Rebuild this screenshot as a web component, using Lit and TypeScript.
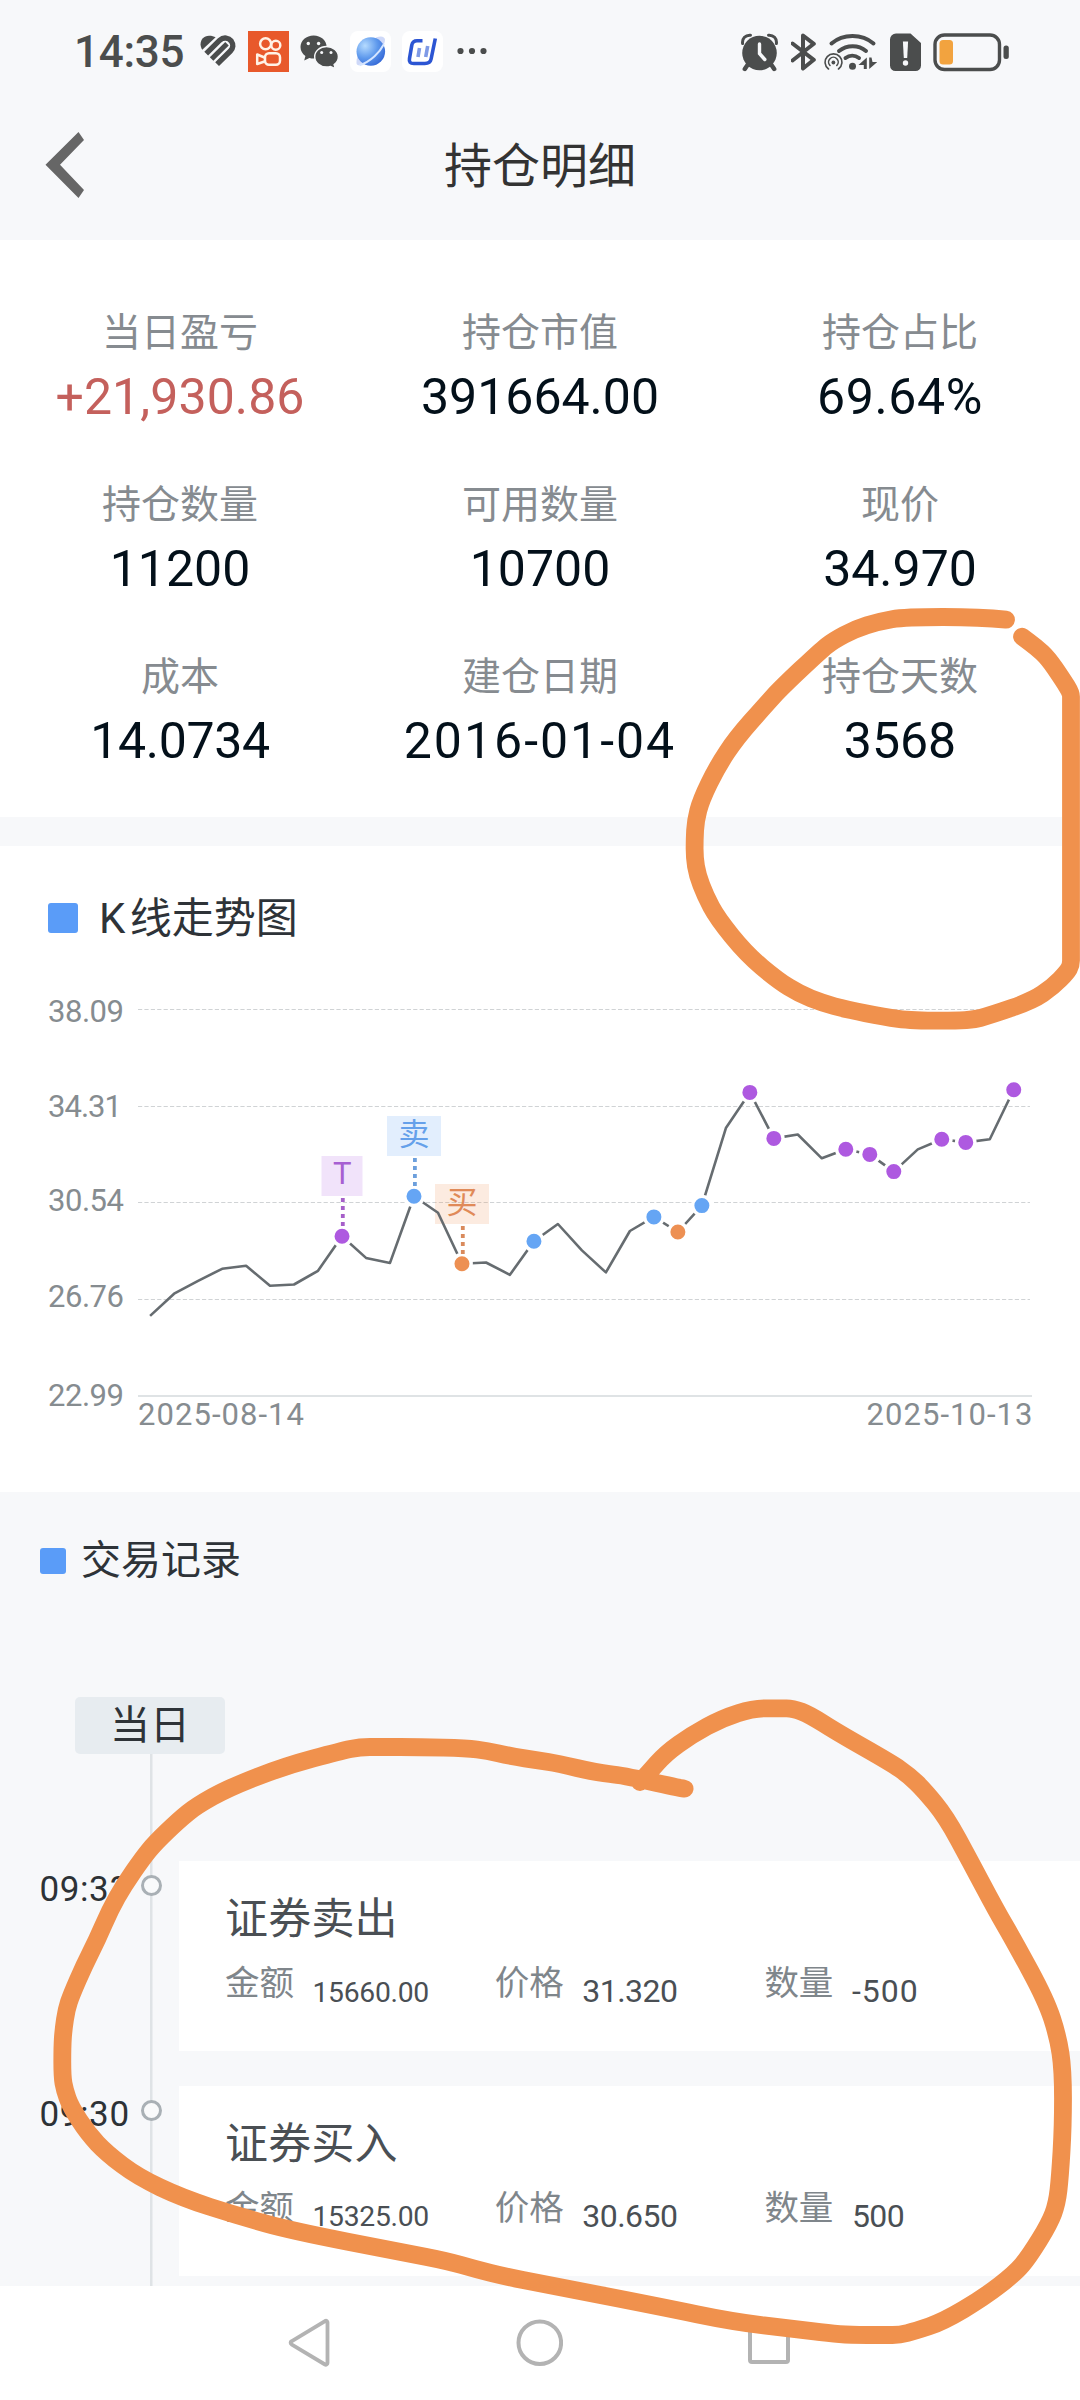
import { LitElement, html, svg, css } from "lit";
import { customElement, property } from "lit/decorators.js";

type Point = [number, number];

const FONT = css`Roboto, "Noto Sans CJK SC", sans-serif`;

/** Smooths a freehand stroke by running quadratic curves through segment midpoints. */
function smooth(points: Point[]): string {
  let d = `M${points[0][0]} ${points[0][1]}`;
  for (let i = 1; i < points.length - 1; i++) {
    const [x, y] = points[i];
    const [nx, ny] = points[i + 1];
    d += `Q${x} ${y} ${(x + nx) / 2} ${(y + ny) / 2}`;
  }
  const last = points[points.length - 1];
  return `${d}L${last[0]} ${last[1]}`;
}

@customElement("status-bar")
export class StatusBar extends LitElement {
  static styles = css`
    :host { display: flex; align-items: center; justify-content: space-between; height: 103px; padding: 0 71px 0 74px; color: #4b4d4d; font-family: ${FONT}; }
    svg { display: block; flex: none; }
    .group { display: flex; align-items: center; gap: 11px; }
    .right { gap: 12.5px; }
    .time { width: 115px; font-size: 44px; line-height: 52px; font-weight: 500; letter-spacing: -0.3px; white-space: nowrap; }
    .dots { margin-left: 3px; }
    .wifi { margin-left: -5px; }
  `;
  render() {
    return html`
      <div class="group">
        <span class="time">14:35</span>
        <svg width="37" height="41" viewBox="0 0 37 41">
          <path d="M2.3 18.8C-1.8 12.500 1.800 4.700 9 4.700c2.800 0 5 .6 6.600 1.600z" fill="currentColor" />
          <path d="M6.2 22.6 19.8 9.200c4-3.600 9-2.300 11.400.8 2.500 3.400 2 7.200-.8 10L17.100 33.200" fill="none" stroke="currentColor" stroke-width="5.4" />
          <path d="M11.600 28 27 12.800" stroke="currentColor" stroke-width="5" />
        </svg>
        <svg width="41" height="41" viewBox="0 0 41 41">
          <rect width="41" height="41" fill="#e8592b" />
          <g fill="none" stroke="#fff3e6" stroke-width="2.500">
            <circle cx="17.600" cy="12.700" r="5.500" />
            <circle cx="27.800" cy="14.200" r="4.500" />
            <rect x="17" y="22.300" width="15" height="11.500" rx="4" />
            <path d="M16.500 26.500 9.200 23.500v9.500l7.300-2.500" stroke-linejoin="round" />
          </g>
        </svg>
        <svg width="39" height="41" viewBox="0 0 39 41">
          <path d="M13.600 4.500C6.300 4.500.5 9.500.5 16c0 3.700 1.900 6.800 4.900 8.900L4.200 29.600l5.200-2.700c1.400.4 2.800.6 4.200.6 7.300 0 13.100-5 13.100-11.500S20.900 4.500 13.600 4.500z" fill="currentColor" />
          <path d="M26.500 15.500c-6.500 0-11.800 4.600-11.800 10.200S20 36 26.500 36c1.500 0 2.800-.2 4-.6l4.800 2.300-1.200-4.200c2.600-1.900 4.300-4.600 4.300-7.800 0-5.600-5.400-10.200-11.900-10.200z" fill="currentColor" stroke="#f7f8fa" stroke-width="1.400" />
          <g fill="#f7f8fa"><circle cx="8.300" cy="12.500" r="1.700" /><circle cx="18.600" cy="12.500" r="1.700" /><circle cx="21.700" cy="21.500" r="1.500" /><circle cx="31" cy="21.500" r="1.500" /></g>
        </svg>
        <svg width="41" height="41" viewBox="0 0 41 41">
          <defs>
            <radialGradient id="globe" cx="0.300" cy="0.300" r="0.800"><stop offset="0" stop-color="#b5dbff" /><stop offset="0.550" stop-color="#5d98ec" /><stop offset="1" stop-color="#3467d6" /></radialGradient>
          </defs>
          <rect width="41" height="41" rx="8" fill="#fff" />
          <path d="M26 6.500C31 4.500 35 5.500 35 9c0 6-8 14.500-15 20.500C14 34.500 6.500 36 6.500 32c0-3 0-5 2-8z" fill="#cfd9f8" />
          <circle cx="20.800" cy="20.500" r="14.300" fill="url(#globe)" />
          <path d="M34 13C30 21 21 30.500 9.500 34.200" fill="none" stroke="#d5e5ff" stroke-width="2" />
        </svg>
        <svg width="41" height="41" viewBox="0 0 41 41">
          <rect width="41" height="41" rx="8" fill="#fff" />
          <path d="M20.500 9.800h-5.500c-3 0-4.600 1.500-5.200 4.300L7.500 27.500c-.7 3.600.8 5 4.300 5h11c3.500 0 5.700-1.200 6.300-4.500L33.300 7.500" fill="none" stroke="#2c55d3" stroke-width="3.600" />
          <path d="M17.500 17l-1.500 9M25.700 15l-2 11" stroke="#7f9ae6" stroke-width="3.600" />
        </svg>
        <svg class="dots" width="30" height="41" viewBox="0 0 30 41" fill="currentColor">
          <circle cx="3.500" cy="20" r="3.100" /><circle cx="15" cy="20" r="3.100" /><circle cx="26.500" cy="20" r="3.100" />
        </svg>
      </div>
      <div class="group right">
        <svg width="37" height="40" viewBox="0 0 37 40">
          <circle cx="18.500" cy="21" r="17.300" fill="currentColor" />
          <path d="M6.500 33 3.800 37M30.500 33l2.700 4" stroke="currentColor" stroke-width="4.400" stroke-linecap="round" />
          <path d="M1.600 11.500C1 6.500 4.500 2.800 9.500 3.200M35.400 11.500C36 6.500 32.500 2.800 27.500 3.200" fill="none" stroke="currentColor" stroke-width="3" stroke-linecap="round" />
          <path d="M18.500 12v9.500l5.300 6" fill="none" stroke="#f7f8fa" stroke-width="3.400" stroke-linecap="round" />
        </svg>
        <svg width="26" height="40" viewBox="0 0 26 40">
          <path d="M1.500 11.500 22.800 27.800 12 36.500v-33l10.800 8.300L1.500 28.500" fill="none" stroke="currentColor" stroke-width="4" stroke-linejoin="round" stroke-linecap="round" />
        </svg>
        <svg class="wifi" width="53" height="40" viewBox="0 0 53 40">
          <g fill="none" stroke="currentColor" stroke-linecap="round">
            <path d="M7.500 11.500c11.500-10 30.500-10 42 0" stroke-width="4" />
            <path d="M15 19c8-6.500 19.500-6.500 27 0" stroke-width="4" />
            <path d="M21.500 26c4-3 9.500-3 13.500 0" stroke-width="4" />
            <path d="M4.500 37a8.400 8.400 0 1 1 10 0" stroke-width="1.600" />
            <path d="M6 33.500a4.800 4.800 0 1 1 6.800 0" stroke-width="1.600" />
          </g>
          <circle cx="9.400" cy="30.500" r="1.900" fill="currentColor" />
          <circle cx="28.500" cy="34.300" r="3.500" fill="currentColor" />
          <path d="M42.800 25.500V37h-3v-4h-5.300zM45.200 37V25.500h2.300l1 4.500h4.700z" fill="currentColor" />
        </svg>
        <svg width="31" height="40" viewBox="0 0 31 40">
          <path d="M6 1.500h14.500L31 11v22.500a5.500 5.500 0 0 1-5.500 5.500h-20A5.500 5.500 0 0 1 0 33.500v-26a6 6 0 0 1 6-6z" fill="currentColor" />
          <path d="M12.900 9.500h5.200l-.9 16.500h-3.400z" fill="#f7f8fa" /><circle cx="15.500" cy="31" r="2.700" fill="#f7f8fa" />
        </svg>
        <svg width="76" height="40" viewBox="0 0 76 40">
          <rect x="2" y="3" width="64.500" height="34.500" rx="9.500" fill="none" stroke="currentColor" stroke-width="3.400" />
          <rect x="6.500" y="8" width="13.500" height="24.500" rx="3.500" fill="#f2a33f" />
          <rect x="70.500" y="13.500" width="5.300" height="13.500" rx="2.500" fill="currentColor" />
        </svg>
      </div>
    `;
  }
}

@customElement("position-stats")
export class PositionStats extends LitElement {
  static styles = css`
    :host { display: grid; grid-template-columns: repeat(3, 360px); grid-auto-rows: 172px; box-sizing: border-box; height: 577px; padding-top: 62.500px; background: #fff; font-family: ${FONT}; }
    .cell { display: flex; flex-direction: column; align-items: center; white-space: nowrap; }
    .label { font-size: 39px; line-height: 60px; color: #868b90; }
    .value { margin-top: 4.500px; font-size: 50px; line-height: 60px; color: #03101a; }
    .gain { color: #c4605c; letter-spacing: 0.100px; }
    .ratio { letter-spacing: 0.600px; }
    .cost { letter-spacing: -0.300px; }
    .date { letter-spacing: 2px; }
  `;
  private cells: [string, string, string][] = [
    ["当日盈亏", "+21,930.86", "gain"],
    ["持仓市值", "391664.00", ""],
    ["持仓占比", "69.64%", "ratio"],
    ["持仓数量", "11200", ""],
    ["可用数量", "10700", ""],
    ["现价", "34.970", ""],
    ["成本", "14.0734", "cost"],
    ["建仓日期", "2016-01-04", "date"],
    ["持仓天数", "3568", ""],
  ];
  render() {
    return this.cells.map(
      ([label, value, kind]) => html`<div class="cell"><span class="label">${label}</span><span class="value ${kind}">${value}</span></div>`
    );
  }
}

@customElement("trend-chart")
export class TrendChart extends LitElement {
  static styles = css`
    :host { display: block; height: 646px; background: #fff; font-family: ${FONT}; }
    .heading { display: flex; align-items: center; height: 80px; padding: 32px 0 0 48px; }
    .mark { width: 30px; height: 30px; margin-bottom: 1px; border-radius: 3px; background: #5a9cf8; }
    .title { margin: 2px 0 0 21px; font-size: 42px; line-height: 60px; color: #2e3338; }
    .latin { margin-right: 4.500px; }
    svg { display: block; }
    .tick { font-size: 31px; fill: #868c90; }
    .flag { font-size: 31px; text-anchor: middle; }
  `;
  private ys = [
    1315.9, 1293.7, 1280.8, 1268.8, 1265.8, 1285.8, 1284.5, 1270.8, 1236.3, 1257.9, 1262.9, 1196.2, 1212.7, 1263.7,
    1262.5, 1274.8, 1241.3, 1224, 1250.4, 1272.4, 1231, 1216.9, 1232, 1205.6, 1128.1, 1092.4, 1138.4, 1134.5, 1158.3,
    1149.2, 1154.4, 1171.6, 1149.4, 1139.2, 1142.4, 1139.2, 1089.7,
  ];
  private dots: Record<string, number[]> = {
    "#ae59e0": [8, 25, 26, 29, 30, 31, 33, 34, 36],
    "#65a5f4": [11, 16, 21, 23],
    "#ed9053": [13, 22],
  };
  private ticks: [string, number, number][] = [
    ["38.09", 1009.5, 1021.500], ["34.31", 1106.5, 1117.300], ["30.54", 1202.5, 1211.300], ["26.76", 1299.5, 1307.300], ["22.99", 1396, 1406.300],
  ];
  private x(i: number) {
    return 150.1 + i * 23.99;
  }
  render() {
    const line = this.ys.map((y, i) => `${this.x(i).toFixed(1)},${y}`).join(" ");
    return html`
      <div class="heading"><span class="mark"></span><span class="title"><span class="latin">K</span>线走势图</span></div>
      <svg width="1080" height="500" viewBox="0 958 1080 500">
        ${this.ticks.map(([text, y, base], i) => svg`
          <text class="tick" x="48" y=${base} textLength=${text.endsWith("1") ? 74 : 76}>${text}</text>
          ${i < 4
            ? svg`<line x1="138" x2="1030" y1=${y} y2=${y} stroke="#d0d3d5" stroke-width="1" stroke-dasharray="4.200 2.200" />`
            : svg`<line x1="138" x2="1032" y1=${y} y2=${y} stroke="#dfe3e5" stroke-width="2" />`}`)}
        <text class="tick" x="138" y="1425" textLength="166">2025-08-14</text>
        <text class="tick" x="866.500" y="1425" textLength="166">2025-10-13</text>
        <rect x="321.500" y="1156" width="41" height="40" fill="#ae59e0" fill-opacity="0.170" />
        <rect x="387" y="1116" width="54" height="40" fill="#65a5f4" fill-opacity="0.190" />
        <rect x="435" y="1184" width="54" height="40" fill="#ed9053" fill-opacity="0.180" />
        <polyline points=${line} fill="none" stroke="#666c70" stroke-width="2.600" stroke-linejoin="round" />
        ${Object.entries(this.dots).map(([color, indexes]) => indexes.map((i) => svg`<circle cx=${this.x(i)} cy=${this.ys[i]} r="9.200" fill=${color} stroke="#fff" stroke-width="3.400" />`))}
        <g fill="none" stroke-width="3.800" stroke-dasharray="4 4">
          <path d="M342.800 1198v28" stroke="#a65fc9" /><path d="M414.900 1158v28" stroke="#6c9fdc" /><path d="M462.800 1226v28" stroke="#d98a5c" />
        </g>
        <text class="flag" x="342.300" y="1184" fill="#a75fd2">T</text>
        <text class="flag" x="414" y="1144.500" fill="#65a0ea">卖</text>
        <text class="flag" x="462" y="1212.500" fill="#e08a58">买</text>
      </svg>
    `;
  }
}

@customElement("trade-record")
export class TradeRecord extends LitElement {
  static styles = css`
    :host { display: grid; grid-template-columns: 139px 40px 1fr; height: 190px; font-family: ${FONT}; white-space: nowrap; }
    .time { padding: 9px 0 0 39.500px; font-size: 35px; line-height: 40px; letter-spacing: 0.600px; color: #2d3236; }
    .node { box-sizing: border-box; width: 21px; height: 21px; margin: 14px 0 0 1.800px; border: 3px solid #a9b0b5; border-radius: 50%; background: #f9fafb; }
    .card { padding: 33px 0 0 46px; background: #fff; }
    .name { font-size: 43px; line-height: 50px; letter-spacing: 0.200px; color: #4a4f54; }
    .metrics { display: grid; grid-template-columns: repeat(3, 269.700px); margin-top: 19px; }
    .metric { display: flex; gap: 18.500px; line-height: 40px; }
    .label { font-size: 34.500px; color: #7f868b; }
    .value { padding-top: 8px; font-size: 32px; letter-spacing: -0.500px; color: #4a4f54; }
    .small { padding-top: 9.500px; font-size: 28.300px; letter-spacing: -0.300px; }
    .negative { letter-spacing: 1px; }
  `;
  @property() time = "";
  @property() name = "";
  @property({ type: Array }) values: string[] = [];
  private kind(value: string, index: number) {
    return index === 0 ? "small" : value.startsWith("-") ? "negative" : "";
  }
  render() {
    return html`
      <span class="time">${this.time}</span>
      <span class="node"></span>
      <div class="card">
        <div class="name">${this.name}</div>
        <div class="metrics">
          ${["金额", "价格", "数量"].map((label, i) => html`<div class="metric"><span class="label">${label}</span><span class="value ${this.kind(this.values[i], i)}">${this.values[i]}</span></div>`)}
        </div>
      </div>
    `;
  }
}

@customElement("app-root")
export class AppRoot extends LitElement {
  static styles = css`
    :host { display: block; position: relative; width: 1080px; height: 2400px; overflow: hidden; background: #f7f8fa; font-family: ${FONT}; }
    .header { display: grid; grid-template-columns: 1fr auto 1fr; align-items: center; height: 137px; box-sizing: border-box; padding-bottom: 14px; }
    .back { display: block; margin-left: 45px; }
    .title { font-size: 48px; line-height: 60px; color: #333; margin-top: 4px; }
    .gap { height: 29px; }
    .records { height: 794px; overflow: hidden; }
    .heading { display: flex; align-items: center; height: 60px; padding: 38px 0 0 40px; }
    .mark { width: 26px; height: 26px; margin-top: 2px; border-radius: 3px; background: #5a9cf8; }
    .name { margin: 1px 0 0 15px; font-size: 40px; line-height: 60px; color: #2e3338; }
    .day { width: 150px; height: 57px; margin: 107px 0 0 75px; border-radius: 5px; background: #e7ecf0; font-size: 40px; line-height: 57px; text-align: center; color: #2e3338; }
    .timeline { display: flex; flex-direction: column; gap: 34.500px; height: 425px; padding-top: 107px; background: linear-gradient(#dfe3e6, #dfe3e6) 150px 0 / 2.500px 100% no-repeat; }
    .nav { display: flex; justify-content: space-between; align-items: center; height: 114px; padding: 0 288px; box-sizing: border-box; background: #fff; }
    .ink { position: absolute; left: 0; top: 0; pointer-events: none; }
  `;
  private daysMark: Point[] = [
    [1006, 619.7], [981, 617], [905, 617], [879, 621.5], [855, 629], [832.7, 641], [820.6, 650.7], [781, 688], [765.5, 705],
    [736.3, 738], [717.3, 766.7], [701, 800], [695.6, 820.9], [694.6, 839.4], [694.6, 857.7], [697.4, 874.7], [705.3, 895.6],
    [717.3, 918.2], [746.6, 954.3], [777.6, 980.2], [800, 994.1], [822.4, 1003.1], [846.5, 1009.4], [884.4, 1017],
    [912, 1020.7], [970.4, 1020.7], [991, 1015], [1032.4, 1000.8], [1053, 986.6], [1067, 972.2], [1071, 965], [1071, 956],
    [1071, 700], [1071, 693], [1063, 680], [1048, 658], [1036, 647], [1022, 636.7],
  ];
  private tradesMark: Point[] = [
    [684.6, 1788.7], [677.7, 1787.7], [622.6, 1775.3], [596.8, 1772.7], [557, 1763.3], [540, 1760.7], [509.6, 1756],
    [487.3, 1750.7], [466.6, 1748.3], [420, 1747], [380, 1747], [359.8, 1747], [341, 1751], [285.8, 1765.7], [229, 1787.7],
    [196.3, 1806], [179, 1820], [155, 1843], [143, 1857.7], [124, 1885], [110, 1910], [97, 1940], [84.4, 1965], [71.3, 1995],
    [66.5, 2009.3], [63.4, 2030], [62.3, 2046.7], [62.3, 2076.7], [64.7, 2090], [70.6, 2106.7], [87.8, 2133.3],
    [106.7, 2153.3], [137.7, 2176.7], [182.5, 2198], [237.6, 2215.7], [292.7, 2231], [403, 2252.3], [447.7, 2261],
    [475, 2269], [506, 2276.7], [540, 2283.3], [660.5, 2306.7], [732.8, 2321.7], [794.8, 2329], [829.3, 2333.3],
    [850, 2335], [885, 2335], [900, 2335], [915, 2331], [943, 2321.7], [984, 2297.3], [1015, 2273.3], [1029, 2256.7],
    [1049.6, 2223.3], [1057, 2203.3], [1060, 2176.7], [1063, 2126.7], [1063, 2070], [1058, 2036.7], [1046, 2000],
    [1013.5, 1940], [996, 1910], [970.4, 1861.7], [946, 1816.7], [924, 1790], [908.5, 1775], [891, 1763], [836, 1731.7],
    [810, 1715], [793, 1708.3], [780, 1708.3], [753.5, 1708.3], [722.5, 1718], [691.5, 1735], [665.7, 1753.3],
    [648.5, 1773], [640, 1782],
  ];
  render() {
    return html`
      <status-bar></status-bar>
      <div class="header">
        <svg class="back" width="40" height="68" viewBox="0 0 40 68"><path d="M33.500 1 39 9 15 33.700 39 59l-5.500 8L.5 33.700z" fill="#666" /></svg>
        <span class="title">持仓明细</span>
      </div>
      <position-stats></position-stats>
      <div class="gap"></div>
      <trend-chart></trend-chart>
      <section class="records">
        <div class="heading"><span class="mark"></span><span class="name">交易记录</span></div>
        <div class="day">当日</div>
        <div class="timeline">
          <trade-record time="09:33" name="证券卖出" .values=${["15660.00", "31.320", "-500"]}></trade-record>
          <trade-record time="09:30" name="证券买入" .values=${["15325.00", "30.650", "500"]}></trade-record>
        </div>
      </section>
      <nav class="nav">
        <svg width="42" height="50" viewBox="0 0 42 50"><path d="M37.500 2.800a1.700 1.700 0 0 1 2 1.700v40.500a1.700 1.700 0 0 1-2.500 1.500L3.500 26.300a1.700 1.700 0 0 1 0-3z" fill="none" stroke="#b3b3b3" stroke-width="3.800" /></svg>
        <svg width="48" height="50" viewBox="0 0 48 50"><circle cx="24.800" cy="24.700" r="21.300" fill="none" stroke="#b3b3b3" stroke-width="4" /></svg>
        <svg width="44" height="50" viewBox="0 0 44 50"><rect x="2" y="5.500" width="38" height="38.500" rx="2" fill="none" stroke="#b3b3b3" stroke-width="4" /></svg>
      </nav>
      <svg class="ink" width="1080" height="2400" viewBox="0 0 1080 2400" fill="none" stroke="#f0914d" stroke-width="17.800" stroke-linecap="round" stroke-linejoin="round">
        <path d=${smooth(this.daysMark)} />
        <path d=${smooth(this.tradesMark)} />
      </svg>
    `;
  }
}
